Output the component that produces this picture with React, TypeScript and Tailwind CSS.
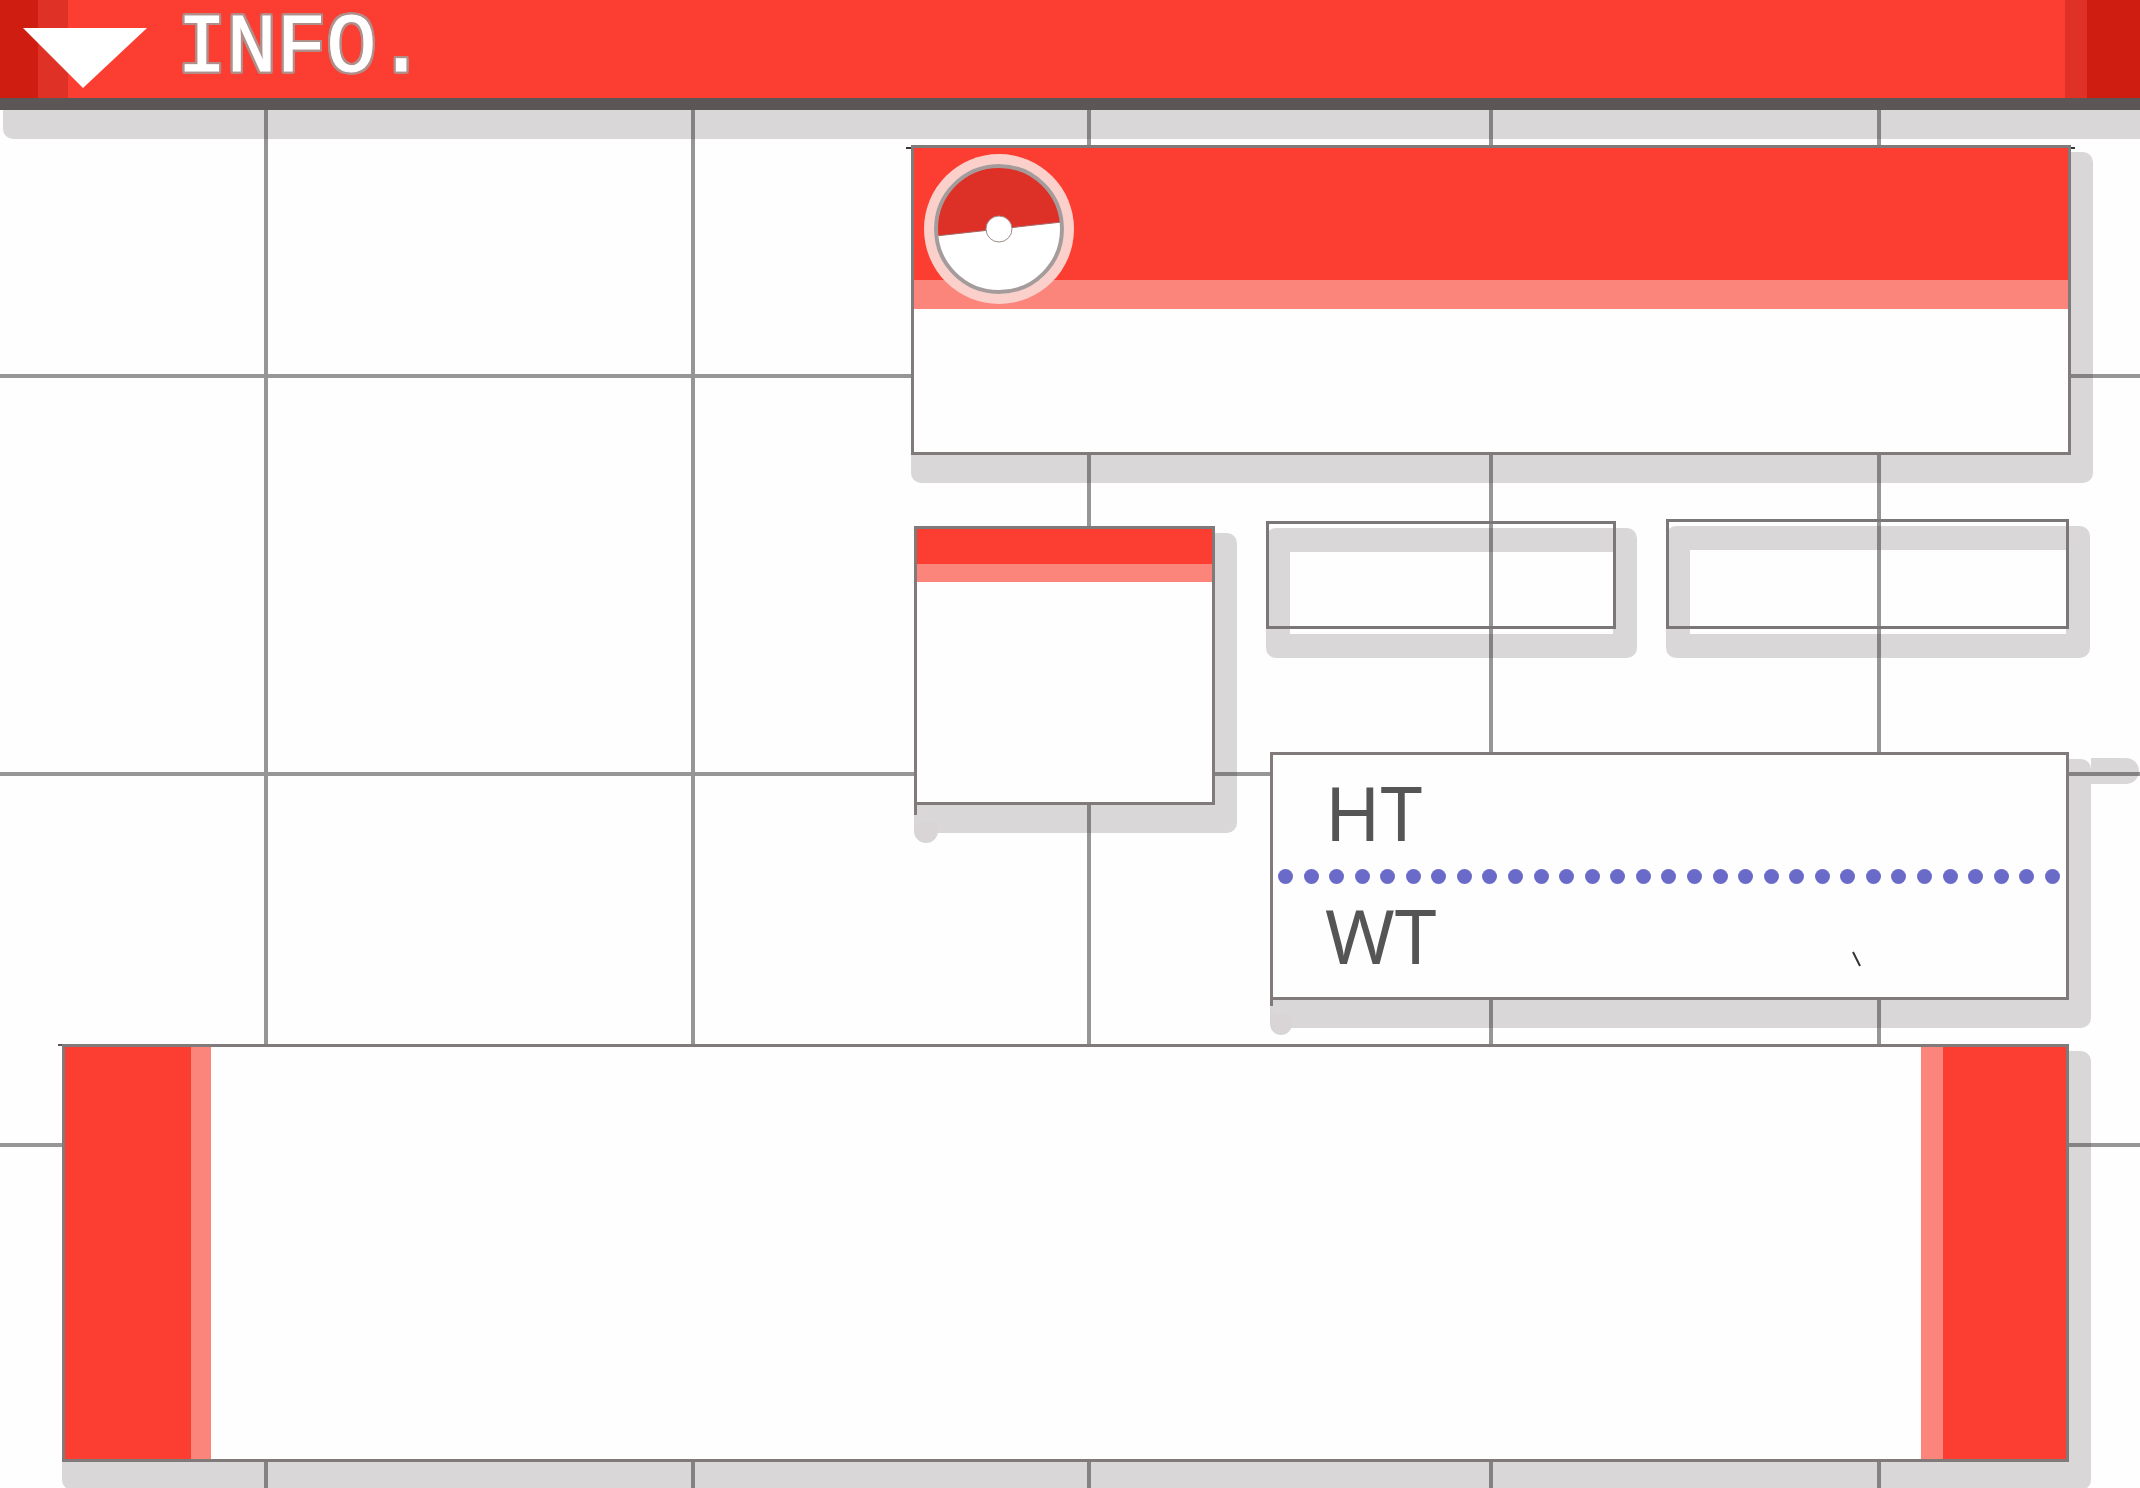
import React from "react";

const DOTS = Array.from({ length: 31 }, (_, i) => i);

function GridLines() {
  return (
    <div aria-hidden="true" className="absolute inset-0">
      <div className="absolute inset-0 grid grid-cols-[268fr_427fr_396fr_402fr_388fr_259fr]">
        <div className="border-r-4 border-[#969696]" />
        <div className="border-r-4 border-[#969696]" />
        <div className="border-r-4 border-[#969696]" />
        <div className="border-r-4 border-[#969696]" />
        <div className="border-r-4 border-[#969696]" />
      </div>
      <div className="absolute inset-0 grid grid-rows-[378fr_398fr_371fr_341fr]">
        <div className="border-b-4 border-[#969696]" />
        <div className="border-b-4 border-[#969696]" />
        <div className="border-b-4 border-[#969696]" />
      </div>
    </div>
  );
}

function Shadow() {
  return (
    <div
      aria-hidden="true"
      className="absolute top-[7px] left-0 -right-[22px] -bottom-7 rounded-[10px] bg-[#36262a]/18"
    />
  );
}

function Ball() {
  return (
    <svg viewBox="0 0 150 150" className="size-[150px]" role="img" aria-label="Ball">
      <circle cx="75" cy="75" r="75" fill="#fbcfca" />
      <circle cx="75" cy="75" r="65" fill="#fff" />
      <path d="M12 82A63 63 0 0 1 138 68Z" fill="#dd3128" />
      <path d="M12 82L138 68" stroke="#a56a66" strokeWidth="1" />
      <circle cx="75" cy="75" r="63" fill="none" stroke="#a59b9b" strokeWidth="4" />
      <circle cx="75" cy="75" r="13" fill="#fff" stroke="#a08c8c" strokeWidth="1" />
    </svg>
  );
}

function HollowBox({ className = "" }: { className?: string }) {
  return (
    <div className={"relative " + className}>
      <div
        aria-hidden="true"
        className="absolute top-[7px] left-0 -right-[21px] -bottom-[29px] rounded-[10px] border-24 border-[#36262a]/18"
      />
      <div className="relative h-full border-[3px] border-[#7b7778]" />
    </div>
  );
}

export default function App() {
  return (
    <div className="relative flex min-h-screen flex-col overflow-hidden bg-[#fefefe] font-['Noto_Sans',sans-serif]">
      <GridLines />

      <header className="relative">
        <div aria-hidden="true" className="absolute right-0 -bottom-[29px] left-[3px] h-10 rounded-bl-[10px] bg-[#36262a]/18" />
        <div className="relative flex h-[110px] border-b-12 border-[#5d5657] bg-[#fb3d32]">
          <div className="w-[38px] bg-[#cf1d12]" />
          <div className="w-[30px] bg-[#e03127]" />
          <button type="button" aria-label="Collapse" className="-ml-[45px] mt-[28px] h-[60px] w-[124px]">
            <svg viewBox="0 0 124 60" className="size-full">
              <path d="M0 0H124L60 60Z" fill="#fff" />
            </svg>
          </button>
          <h1 className="ml-[30px] font-['Liberation_Mono',monospace] text-[83px] leading-[98px] text-white [-webkit-text-stroke:1px_white] [filter:drop-shadow(2px_0_0_#b08f8b)_drop-shadow(-2px_0_0_#b08f8b)_drop-shadow(0_2px_0_#b08f8b)_drop-shadow(0_-2px_0_#b08f8b)]">
            INFO.
          </h1>
          <div className="ml-auto w-[22px] bg-[#e03127]" />
          <div className="w-[53px] bg-[#cf1d12]" />
        </div>
      </header>

      <main className="relative flex flex-1 flex-col pt-[35px] pb-[26px]">
        <div className="mr-[69px] ml-[42.57%]">
          <section className="relative">
            <Shadow />
            <div aria-hidden="true" className="absolute top-[2px] -right-1 -left-[5px] h-[2px] bg-[#3a3434]" />
            <div className="relative h-[310px] border-[3px] border-[#807a7b] bg-[#fefefe]">
              <div className="h-[161px] border-b-[29px] border-[#fb857b] bg-[#fb3d32] pt-[6px] pl-[10px]">
                <Ball />
              </div>
            </div>
          </section>

          <div className="mt-16 flex">
            <section className="relative mt-[7px] ml-[3px] h-[279px] w-[301px] shrink-0">
              <Shadow />
              <div aria-hidden="true" className="absolute -bottom-[38px] left-0 h-5 w-6 rounded-b-full bg-[#d9d5d6]" />
              <div aria-hidden="true" className="absolute -bottom-[10px] left-0 h-3 w-[3px] bg-[#807a7b]" />
              <div className="relative h-full border-[3px] border-[#807a7b] bg-[#fefefe]">
                <div className="h-[53px] border-b-[18px] border-[#fb857b] bg-[#fb3d32]" />
              </div>
            </section>

            <div className="mr-[2px] ml-[51px] flex-1">
              <div className="grid grid-cols-[349fr_402fr] items-end gap-[50px]">
                <HollowBox className="h-[108px]" />
                <HollowBox className="h-[110px]" />
              </div>

              <section className="relative mt-[123px] ml-1">
                <Shadow />
                <div aria-hidden="true" className="absolute top-[6px] left-full ml-[22px] h-[26px] w-[48px] rounded-r-full bg-[#36262a]/18" />
                <div aria-hidden="true" className="absolute -bottom-[35px] left-0 h-5 w-[22px] rounded-b-full bg-[#d9d5d6]" />
                <div aria-hidden="true" className="absolute -bottom-[6px] left-0 h-2 w-[3px] bg-[#807a7b]" />
                <div className="relative h-[248px] border-[3px] border-[#807a7b] bg-[#fefefe]">
                  <p className="pt-2 pl-[52px] text-[75px] leading-[98px] text-[#555]">HT</p>
                  <div aria-hidden="true" className="mt-2 mr-[6px] ml-[5px] flex justify-between">
                    {DOTS.map((i) => (
                      <span key={i} className="size-[15px] rounded-full bg-[#6a6bc9]" />
                    ))}
                  </div>
                  <div className="flex justify-between pr-[203px] pl-[52px]">
                    <p className="text-[75px] leading-[102px] text-[#555]">WT</p>
                    <svg aria-hidden="true" viewBox="0 0 12 18" className="mt-[66px] h-[18px] w-3">
                      <path d="M2 2L9 16" stroke="#333" strokeWidth="2" />
                    </svg>
                  </div>
                </div>
              </section>
            </div>
          </div>
        </div>

        <section className="relative mt-11 mr-[71px] ml-[62px] flex flex-1 flex-col">
          <Shadow />
          <div aria-hidden="true" className="absolute top-0 -left-1 h-[2px] w-6 bg-[#5d5657]" />
          <div className="relative flex flex-1 justify-between border-[3px] border-[#807a7b] bg-[#fefefe]">
            <div className="w-[146px] border-r-20 border-[#fb857b] bg-[#fb3d32]" />
            <div className="w-[145px] border-l-[22px] border-[#fb857b] bg-[#fb3d32]" />
          </div>
        </section>
      </main>
    </div>
  );
}
